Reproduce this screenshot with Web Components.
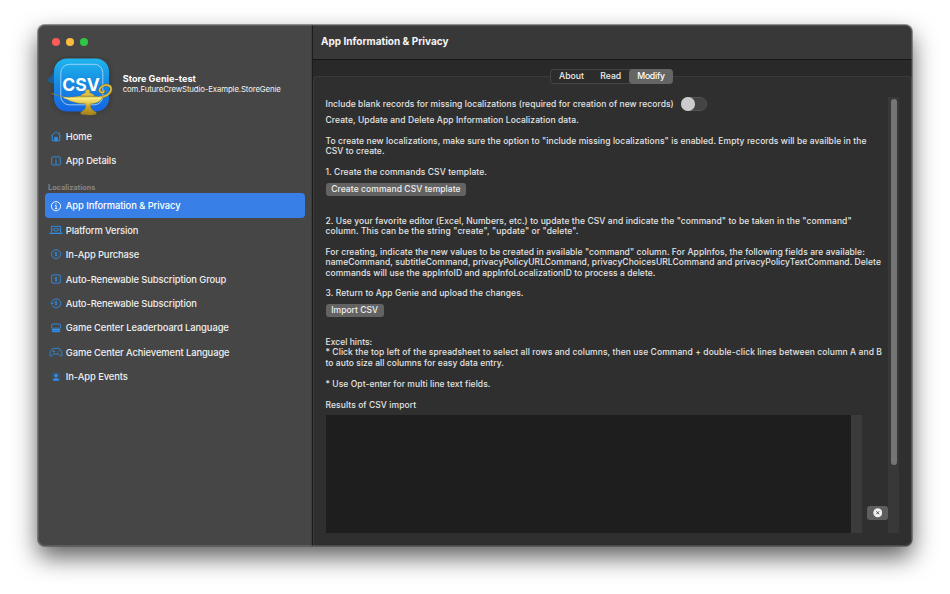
<!DOCTYPE html>
<html lang="en">
<head>
<meta charset="utf-8">
<title>Store Genie</title>
<style>
  body {
    margin: 0;
    width: 950px;
    height: 594px;
    overflow: hidden;
    background: #fff;
    font-family: Inter, "Liberation Sans", sans-serif;
  }
</style>
</head>
<body>
<app-window>
  <side-bar slot="sidebar">
    <app-header slot="header" name="Store Genie-test" bundle="com.FutureCrewStudio-Example.StoreGenie"></app-header>
    <nav-item icon="home" w="26">Home</nav-item>
    <nav-item icon="details" w="50.3">App Details</nav-item>
    <nav-section>Localizations</nav-section>
    <nav-item icon="info" w="114.7" selected>App Information &amp; Privacy</nav-item>
    <nav-item icon="platform" w="72.5">Platform Version</nav-item>
    <nav-item icon="purchase" w="73.3">In-App Purchase</nav-item>
    <nav-item icon="group" w="160.5">Auto-Renewable Subscription Group</nav-item>
    <nav-item icon="renew" w="131">Auto-Renewable Subscription</nav-item>
    <nav-item icon="board" w="163">Game Center Leaderboard Language</nav-item>
    <nav-item icon="game" w="163.7">Game Center Achievement Language</nav-item>
    <nav-item icon="person" w="62">In-App Events</nav-item>
  </side-bar>
  <tool-bar slot="main"></tool-bar>
  <tab-panel slot="main">
    <toggle-row></toggle-row>
    <text-block style="margin-top:3.5px">
      <fit-text w="253.3">Create, Update and Delete App Information Localization data.</fit-text>
      <br>
      <fit-text w="541">To create new localizations, make sure the option to "include missing localizations" is enabled. Empty records will be availble in the</fit-text>
      <fit-text w="59">CSV to create.</fit-text>
      <br>
      <fit-text w="161.5">1. Create the commands CSV template.</fit-text>
    </text-block>
    <push-button w="129.5">Create command CSV template</push-button>
    <text-block style="margin-top:19.6px">
      <fit-text w="526.2">2. Use your favorite editor (Excel, Numbers, etc.) to update the CSV and indicate the "command" to be taken in the "command"</fit-text>
      <fit-text w="253">column. This can be the string "create", "update" or "delete".</fit-text>
      <br>
      <fit-text w="539.3">For creating, indicate the new values to be created in available "command" column. For AppInfos, the following fields are available:</fit-text>
      <fit-text w="555.5">nameCommand, subtitleCommand, privacyPolicyURLCommand, privacyChoicesURLCommand and privacyPolicyTextCommand. Delete</fit-text>
      <fit-text w="330">commands will use the appInfoID and appInfoLocalizationID to process a delete.</fit-text>
      <br>
      <fit-text w="198">3. Return to App Genie and upload the changes.</fit-text>
    </text-block>
    <push-button w="47">Import CSV</push-button>
    <text-block style="margin-top:19.8px">
      <fit-text w="46.7">Excel hints:</fit-text>
      <fit-text w="556.5">* Click the top left of the spreadsheet to select all rows and columns, then use Command + double-click lines between column A and B</fit-text>
      <fit-text w="178.5">to auto size all columns for easy data entry.</fit-text>
      <br>
      <fit-text w="165">* Use Opt-enter for multi line text fields.</fit-text>
      <br>
      <fit-text w="90.7">Results of CSV import</fit-text>
    </text-block>
    <results-box></results-box>
  </tab-panel>
</app-window>

<script>
// Small base class: clones the static template into an open shadow root
class BaseElement extends HTMLElement {
  constructor() {
    super();
    const shadow = this.attachShadow({ mode: "open" });
    const template = document.createElement("template");
    template.innerHTML = this.render();
    shadow.append(template.content.cloneNode(true));
  }
}

// Single line of text tracked out to the width in its "w" attribute
class FitText extends BaseElement {
  render() {
    return `
      <style>
        :host { display: block; white-space: nowrap; }
        span { display: inline-block; }
      </style>
      <span><slot></slot></span>`;
  }

  connectedCallback() {
    const span = this.shadowRoot.querySelector("span");
    const target = parseFloat(this.getAttribute("w"));
    const chars = this.textContent.trim().length;
    if (!target || !chars) { return; }
    const natural = span.getBoundingClientRect().width;
    span.style.letterSpacing = ((target - natural) / chars).toFixed(4) + "px";
  }
}

class AppWindow extends BaseElement {
  render() {
    return `
      <style>
        :host { display: block; padding: 25px 38px 0; }
        .window {
          display: grid;
          grid-template-columns: 274px 1fr;
          height: 521px;
          border-radius: 7px;
          background: #2f2f2f;
          overflow: hidden;
        }
        .shadow {
          border-radius: 7px;
          box-shadow: 0 0 0 1px rgba(70, 70, 70, .55), 0 11px 25px rgba(0, 0, 0, .64);
        }
        .main { display: flex; flex-direction: column; border-left: 1px solid #1c1c1c; min-width: 0; }
        .edge { position: absolute; left: 38px; top: 25px; width: 872px; height: 519px; border: 1px solid rgba(255, 255, 255, .13); border-radius: 7px; }
      </style>
      <div class="shadow">
        <div class="window">
          <slot name="sidebar"></slot>
          <div class="main"><slot name="main"></slot></div>
        </div>
      </div>
      <div class="edge"></div>`;
  }
}

class SideBar extends BaseElement {
  render() {
    return `
      <style>
        :host { display: block; background: #464646; border-right: 1px solid #3c3c3c; box-sizing: border-box; }
        .lights { display: flex; gap: 5.4px; padding: 12.7px 0 0 14px; }
        .lights i { width: 8.4px; height: 8.4px; border-radius: 50%; }
        nav { display: flex; flex-direction: column; padding: 0 6px 0 7px; }
      </style>
      <div class="lights">
        <i style="background:#fc5b57"></i><i style="background:#fdbc40"></i><i style="background:#2fc845"></i>
      </div>
      <slot name="header"></slot>
      <nav><slot></slot></nav>`;
  }
}

class AppHeader extends BaseElement {
  render() {
    return `
      <style>
        :host { display: flex; align-items: center; height: 77.9px; padding-left: 8px; box-sizing: border-box; }
        svg { width: 70px; height: 66px; flex: none; margin-top: 5px; }
        .info { padding-left: 6.7px; color: #f2f2f2; margin-top: -1.5px; }
        .name { font-size: 9.1px; font-weight: 700; line-height: 11px; color: #fff; }
        .bundle { font-size: 7.8px; line-height: 11px; }
      </style>
      <svg viewBox="46 54 70 66">
        <defs>
          <linearGradient id="tile" x1="0" y1="0" x2="0" y2="1">
            <stop offset="0" stop-color="#1fb5ee"/><stop offset=".5" stop-color="#1688e2"/><stop offset="1" stop-color="#1565e2"/>
          </linearGradient>
          <linearGradient id="gold" x1="0" y1="0" x2="0" y2="1">
            <stop offset="0" stop-color="#e3c94c"/><stop offset=".35" stop-color="#f0dc66"/><stop offset=".6" stop-color="#c9a42a"/><stop offset="1" stop-color="#a5821a"/>
          </linearGradient>
          <filter id="soft" x="-20%" y="-20%" width="140%" height="140%"><feGaussianBlur stdDeviation="2"/></filter>
        </defs>
        <rect x="53" y="57" width="57" height="55" rx="14" fill="#2b2b2b" opacity=".45" filter="url(#soft)"/>
        <path d="M54 71c-2 1-1 4-4 5-3 2-2 4-1 5l5 2z" fill="#1c5e96"/>
        <rect x="54" y="57.5" width="55" height="53" rx="13" fill="url(#tile)"/>
        <rect x="60.8" y="63.3" width="42" height="40.5" rx="8.5" fill="none" stroke="#b6ddf8" stroke-width=".8"/>
        <text x="62.3" y="89.6" textLength="37.5" lengthAdjust="spacingAndGlyphs" font-family="Inter, sans-serif" font-size="17.5" font-weight="700" fill="#fff">CSV</text>
        <path d="M99 96.500c5-.3 11.500-3 12-8 .4-4.500-5-5.800-8.800-3.200-3.500 2.400-3.400 5.300-.5 6.200 1.800.4 2.500-1 1.800-2.200" fill="none" stroke="#8c711a" stroke-width="2.600"/>
        <path d="M99 96.500c5-.3 11.500-3 12-8 .4-4.500-5-5.800-8.800-3.200-3.500 2.400-3.400 5.300-.5 6.200 1.800.4 2.500-1 1.800-2.200" fill="none" stroke="#ddc24c" stroke-width="1.500"/>
        <path d="M51.300 92.300c5 .8 9 3.700 16 4 4-.1 8-.8 12-1.100h11c5 0 9 1 13 .5-2.500 4.500-6.500 6.800-12.500 7.100-1.200 3 .6 6 4.500 8 1.600.8 1.500 2.200-.5 2.600-4 .8-9.500.7-13-.1-1.700-.5-1.400-1.900 0-2.600 3.500-2 4.700-5 3.500-7.900-10-.4-15.500-2.500-22.500-6.800-4-2-8-2.200-11.500-3.700z" fill="url(#gold)" stroke="#9b7d19" stroke-width=".4"/>
        <path d="M80.500 95c1-2 3.500-2.700 5.200-3.600-1-1.400-.4-3 1.900-3s2.900 1.600 1.900 3c1.700.9 4.200 1.600 5.200 3.600z" fill="#dcc047" stroke="#92761b" stroke-width=".4"/>
        <path d="M64 96.800c8 1.500 25 1.500 37 .2" fill="none" stroke="#fff7a4" stroke-width=".8"/>
      </svg>
      <div class="info">
        <fit-text class="name" w="73.2"></fit-text>
        <fit-text class="bundle" w="158"></fit-text>
      </div>`;
  }

  connectedCallback() {
    this.shadowRoot.querySelector(".name").textContent = this.getAttribute("name");
    this.shadowRoot.querySelector(".bundle").textContent = this.getAttribute("bundle");
  }
}

// Icons share a 14x12 box
const DOLLAR = `<path d="M8.400 4.900C8.100 4.300 5.700 4.200 5.700 5.300s2.700.5 2.700 1.600-2.400 1-2.800.3M7 3.600v4.900" stroke-width=".7"/>`;
const ICONS = {
  home: `<path d="M1.900 6.300 7 1.700l5.100 4.600M3.300 5.600v5.200h7.400V5.600M10.300 4.200V2.300"/><path d="M5.700 10.800V7.300h2.600v3.500z" fill="currentColor"/>`,
  details: `<rect x="2.700" y="1.800" width="8.600" height="8.200" rx="1"/><path d="M6.200 5.100H7v3M5.900 8.300h2.300M7 3.200v.8" stroke-width=".8"/>`,
  info: `<circle cx="7" cy="6.200" r="4.600"/><path d="M6.200 5.500h.9v3M5.900 8.600h2.500M7 3.300v1"/>`,
  platform: `<path d="M2.400 8.800V2.300h9.200v6.500"/><path d="M.6 9.400h12.800" stroke-width="1.300"/><circle cx="7" cy="5.600" r="1.700"/><path d="M4 4v3.200M10 4v3.200" stroke-width=".6"/>`,
  purchase: `<circle cx="7" cy="6.200" r="4.500"/>${DOLLAR}`,
  group: `<rect x="2.700" y="1.900" width="8.600" height="8.200" rx="1"/>${DOLLAR}`,
  renew: `<path d="M3.100 4.500a4.500 4.500 0 1 1 .1 3.900"/><path d="M1.500 5.700h3L2.900 7.500z" fill="currentColor" stroke-width=".4"/>${DOLLAR}`,
  board: `<rect x="2.700" y="2" width="8.700" height="4.200" rx=".8"/><path d="M2.600 7.700h8.800M3.200 9.500h7.600" stroke-width="1.400"/>`,
  game: `<path d="M3.300 2.800C4.500 1.900 5.400 2.500 7 2.500s2.500-.6 3.700.3c1.400 1.200 2.600 4.600 2.500 6.300-.1 1.300-1.300 1.300-2.100.5L9.300 8H4.700L2.900 9.600C2.100 10.400.9 10.400.8 9.100.7 7.400 1.900 4 3.300 2.800z"/><path d="M3.600 5.400h2.200M4.700 4.300v2.200M8.600 6h.8M9.800 4.800h.8"/>`,
  person: `<rect x="2.700" y="2.100" width="8.800" height="8.700" rx="1" fill="#37536d" stroke="none" opacity=".65"/><circle cx="7" cy="5.500" r="1.800" fill="currentColor" stroke="none"/><path d="M3.800 10.800c0-3.800 6.400-3.800 6.400 0z" fill="currentColor" stroke="none"/>`
};

class NavItem extends BaseElement {
  render() {
    return `
      <style>
        :host {
          display: flex;
          align-items: center;
          height: 24.4px;
          border-radius: 4px;
          padding-left: 4px;
          color: #f0f0f0;
          font-size: 9.4px;
          font-weight: 500;
        }
        :host([selected]) { background: #387fe8; color: #fff; }
        svg { width: 14px; height: 12px; margin-right: 2.8px; color: #2f8fe8; overflow: visible; }
        :host([selected]) svg { color: #fff; }
        fit-text { padding-top: .7px; }
      </style>
      <svg viewBox="0 0 14 12" fill="none" stroke="currentColor" stroke-width=".9" stroke-linejoin="round"></svg>
      <fit-text><slot></slot></fit-text>`;
  }

  connectedCallback() {
    this.shadowRoot.querySelector("svg").innerHTML = ICONS[this.getAttribute("icon")];
    fitSlotted(this);
  }
}

// Tracks a slotted label the same way fit-text does for its own text
function fitSlotted(host) {
  const label = host.shadowRoot.querySelector("fit-text");
  const natural = label.getBoundingClientRect().width;
  const target = parseFloat(host.getAttribute("w"));
  label.style.letterSpacing = ((target - natural) / host.textContent.length).toFixed(4) + "px";
}

class NavSection extends BaseElement {
  render() {
    return `
      <style>
        :host { display: flex; align-items: flex-end; height: 20.7px; padding-left: 3px; color: #858585; font-size: 7.3px; font-weight: 700; line-height: 10.5px; }
      </style>
      <slot></slot>`;
  }
}

class ToolBar extends BaseElement {
  render() {
    return `
      <style>
        :host { display: flex; align-items: center; height: 35px; flex: none; padding: 0 0 1.5px 8px; background: #383838; border-bottom: 1px solid #161616; box-sizing: border-box; color: #f5f5f5; font-size: 10px; font-weight: 700; }
      </style>
      <fit-text w="127.5">App Information &amp; Privacy</fit-text>`;
  }
}

class TabPanel extends BaseElement {
  render() {
    return `
      <style>
        :host { display: flex; flex-direction: column; flex: 1; background: #292929; min-height: 0; padding-top: 9px; }
        .tabs {
          display: flex;
          align-self: center;
          position: relative;
          z-index: 1;
          box-sizing: border-box;
          height: 14.5px;
          width: 122.5px;
          margin-right: 1.6px;
          border-radius: 4px;
          background: #2c2c2c;
          box-shadow: inset 0 0 0 1px #454545;
          color: #eee;
          font-size: 8.7px;
          font-weight: 500;
          line-height: 14px;
        }
        .tabs div { display: flex; justify-content: center; }
        .tabs .on { background: #656565; border-radius: 4px; color: #fff; }
        .group {
          display: flex;
          flex: 1;
          margin-top: -8px;
          border: 1px solid #3b3b3b;
          border-bottom: 0;
          border-radius: 4px 4px 0 0;
          background: #2f2f2f;
          padding: 20px 12.5px 13px 11.5px;
          min-height: 0;
        }
        .content { flex: 1; display: flex; flex-direction: column; align-items: flex-start; min-width: 0; }
        .scroll { width: 10.5px; background: #383838; box-sizing: border-box; padding: 2px 2px 0 3px; flex: none; }
        .thumb { height: 366px; border-radius: 3px; background: #757575; }
      </style>
      <div class="tabs">
        <div style="width:42px"><fit-text w="24.7">About</fit-text></div>
        <div style="width:36.5px"><fit-text w="20.7">Read</fit-text></div>
        <div class="on" style="width:44px"><fit-text w="27.5">Modify</fit-text></div>
      </div>
      <div class="group">
        <div class="content"><slot></slot></div>
        <div class="scroll"><div class="thumb"></div></div>
      </div>`;
  }
}

class ToggleRow extends BaseElement {
  render() {
    return `
      <style>
        :host { display: flex; align-items: center; height: 15px; gap: 6.8px; color: #e4e4e4; font-size: 8.5px; font-weight: 500; }
        fit-text { padding-top: .8px; }
        .track { width: 26px; height: 14.5px; border-radius: 8px; background: #434343; box-sizing: border-box; border: 1px solid #545454; }
        .knob { width: 13.5px; height: 13.5px; margin: -.5px 0 0 -.5px; border-radius: 50%; background: #cbcbcb; }
      </style>
      <fit-text w="348.3">Include blank records for missing localizations (required for creation of new records)</fit-text>
      <div class="track"><div class="knob"></div></div>`;
  }
}

class TextBlock extends BaseElement {
  render() {
    return `
      <style>
        :host { display: block; color: #e4e4e4; font-size: 8.5px; font-weight: 500; line-height: 10.42px; }
      </style>
      <slot></slot>`;
  }
}

class PushButton extends BaseElement {
  render() {
    return `
      <style>
        :host { display: flex; align-items: center; height: 13.2px; margin-top: 5.2px; padding: 0 5.7px; border-radius: 3px; background: #636363; color: #f0f0f0; font-size: 8.5px; font-weight: 500; line-height: 13px; }
      </style>
      <fit-text><slot></slot></fit-text>`;
  }

  connectedCallback() {
    fitSlotted(this);
  }
}

// Empty log area with its own scroll track and a clear button
class ResultsBox extends BaseElement {
  render() {
    return `
      <style>
        :host { display: flex; flex: 1; align-self: stretch; align-items: flex-end; margin-top: 4.7px; }
        .log { width: 525.5px; align-self: stretch; background: #1e1e1e; }
        .track { width: 10.5px; align-self: stretch; background: #3b3b3b; }
        .clear { display: flex; align-items: center; justify-content: center; width: 21.5px; height: 14px; margin: 0 0 13px 5px; border-radius: 3px; background: #5e5e5e; }
        svg { width: 9.5px; height: 9.5px; }
      </style>
      <div class="log"></div>
      <div class="track"></div>
      <div class="clear">
        <svg viewBox="0 0 10 10"><circle cx="5" cy="5" r="4.700" fill="#f0f0f0"/><path d="M3.500 3.500l3 3M6.500 3.500l-3 3" stroke="#4a4a4a" stroke-width="1"/></svg>
      </div>`;
  }
}

customElements.define("app-window", AppWindow);
customElements.define("side-bar", SideBar);
customElements.define("app-header", AppHeader);
customElements.define("nav-item", NavItem);
customElements.define("nav-section", NavSection);
customElements.define("tool-bar", ToolBar);
customElements.define("tab-panel", TabPanel);
customElements.define("toggle-row", ToggleRow);
customElements.define("text-block", TextBlock);
customElements.define("push-button", PushButton);
customElements.define("results-box", ResultsBox);
// Last, so that the fonts of its containers are in place when it measures
customElements.define("fit-text", FitText);
</script>
</body>
</html>
